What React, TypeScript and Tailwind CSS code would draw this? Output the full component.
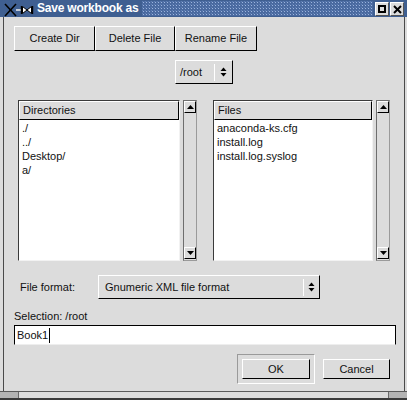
import React from "react";

const raised =
  "border border-t-white border-l-white border-b-black border-r-black bg-[#dcdcdc]";

function UpArrow() {
  return (
    <svg width="7" height="4" viewBox="0 0 7 4">
      <polygon points="0,4 3.5,0 7,4" fill="#000" />
    </svg>
  );
}

function DownArrow() {
  return (
    <svg width="7" height="4" viewBox="0 0 7 4">
      <polygon points="0,0 7,0 3.5,4" fill="#000" />
    </svg>
  );
}

function UpDown() {
  return (
    <svg width="7" height="10" viewBox="0 0 7 10">
      <polygon points="0.5,4 3.5,0.5 6.5,4" fill="#000" />
      <polygon points="0.5,6 6.5,6 3.5,9.5" fill="#000" />
    </svg>
  );
}

function Scrollbar() {
  return (
    <div className="w-[14px] h-full flex flex-col justify-between border border-t-[#6e6e6e] border-l-[#6e6e6e] border-b-[#9a9a9a] border-r-[#9a9a9a] bg-[#dcdcdc] pb-px">
      <div className={`${raised} h-[12px] flex items-center justify-center`}>
        <UpArrow />
      </div>
      <div className={`${raised} h-[12px] flex items-center justify-center`}>
        <DownArrow />
      </div>
    </div>
  );
}

function List({
  title,
  items,
  wide,
}: {
  title: string;
  items: string[];
  wide: boolean;
}) {
  return (
    <div
      className={`${
        wide ? "w-[162px]" : "w-[160px]"
      } h-full flex flex-col border border-t-[#3a3a3a] border-l-[#3a3a3a] border-b-[#f2f2f2] border-r-[#f2f2f2] bg-white`}
    >
      <div className={`${raised} h-[19px] flex items-center pl-[3px] leading-[13px]`}>
        {title}
      </div>
      <div className="flex-1 pt-px pl-[3px] leading-[14px]">
        {items.map((it) => (
          <div key={it}>{it}</div>
        ))}
      </div>
    </div>
  );
}

function TitleIcon() {
  return (
    <svg width="30" height="14" viewBox="0 0 30 14">
      <line x1="1" y1="1" x2="12" y2="13" stroke="#000" strokeWidth="1.6" />
      <line x1="12" y1="1" x2="1" y2="13" stroke="#000" strokeWidth="1.6" />
      <line x1="12" y1="7" x2="17" y2="7" stroke="#e6e6e6" strokeWidth="1.6" />
      <line x1="17.5" y1="3" x2="17.5" y2="11" stroke="#000" strokeWidth="1.4" />
      <polygon points="18.5,3.5 23,7 18.5,10.5" fill="#fff" stroke="#000" strokeWidth="1" />
      <polygon points="27.5,3.5 23,7 27.5,10.5" fill="#fff" stroke="#000" strokeWidth="1" />
      <line x1="28.5" y1="3" x2="28.5" y2="11" stroke="#000" strokeWidth="1.4" />
    </svg>
  );
}

function DotTexture() {
  return (
    <svg width="100%" height="100%" className="block">
      <defs>
        <pattern id="dots" width="3" height="3" patternUnits="userSpaceOnUse">
          <rect x="0" y="0" width="3" height="3" fill="#4a6aa0" />
          <rect x="1" y="1" width="1" height="1" fill="#9ab3dd" />
          <rect x="0" y="0" width="1" height="1" fill="#5f7fb4" />
        </pattern>
      </defs>
      <rect width="100%" height="100%" fill="url(#dots)" />
    </svg>
  );
}

export default function App() {
  return (
    <div className="w-[407px] h-[400px] bg-[#dcdcdc] text-[#111] text-[11px] [font-family:'Liberation_Sans',Arial,sans-serif] overflow-hidden flex flex-col">
      {/* Title bar */}
      <div className="h-[17px] flex items-stretch bg-[#3f5f91]">
        <div className="ml-[4px] mt-[3px] shrink-0">
          <TitleIcon />
        </div>
        <span className="ml-[3px] shrink-0 text-white font-bold text-[12px] leading-[17px] tracking-[-0.2px]">
          Save workbook as
        </span>
        <div className="flex-1 ml-[3px] mr-[2px] my-[1px]">
          <DotTexture />
        </div>
        <div className="shrink-0 mt-[2px] h-[14px] w-[14px] border border-t-white border-l-white border-b-[#555] border-r-[#555] bg-[#dcdcdc] flex items-center justify-center">
          <div className="w-[8px] h-[8px] border-2 border-black" />
        </div>
        <div className="shrink-0 ml-px mr-[3px] mt-[2px] h-[14px] w-[14px] border border-t-white border-l-white border-b-[#555] border-r-[#555] bg-[#dcdcdc] flex items-center justify-center">
          <svg width="9" height="9" viewBox="0 0 9 9">
            <line x1="1" y1="1" x2="8" y2="8" stroke="#000" strokeWidth="2" />
            <line x1="8" y1="1" x2="1" y2="8" stroke="#000" strokeWidth="2" />
          </svg>
        </div>
      </div>

      {/* Body */}
      <div className="flex h-[374px]">
        <div className="w-[4px] border-r border-[#4a4a4a]" />
        <div className="w-[400px] flex flex-col">
          {/* top buttons */}
          <div className="mt-[9px] pl-[10px] flex">
            <div className={`${raised} w-[81px] h-[25px] flex items-center justify-center`}>
              Create Dir
            </div>
            <div className={`${raised} w-[80px] h-[25px] flex items-center justify-center`}>
              Delete File
            </div>
            <div className={`${raised} w-[82px] h-[25px] flex items-center justify-center`}>
              Rename File
            </div>
          </div>

          {/* path option menu */}
          <div className="mt-[9px] flex justify-center">
            <div className={`${raised} w-[58px] h-[24px] flex items-center`}>
              <span className="flex-1 pl-[4px]">/root</span>
              <div className="w-px h-[17px] bg-white" />
              <div className="w-[17px] flex justify-center">
                <UpDown />
              </div>
            </div>
          </div>

          {/* lists */}
          <div className="mt-[16px] h-[161px] pl-[14px] flex">
            <List
              title="Directories"
              items={["./", "../", "Desktop/", "a/"]}
              wide={true}
            />
            <div className="ml-[3px] h-full">
              <Scrollbar />
            </div>
            <div className="ml-[16px] h-full">
              <List
                title="Files"
                items={["anaconda-ks.cfg", "install.log", "install.log.syslog"]}
                wide={false}
              />
            </div>
            <div className="ml-[3px] h-full">
              <Scrollbar />
            </div>
          </div>

          {/* file format */}
          <div className="mt-[14px] flex items-center">
            <span className="pl-[16px] w-[94px]">File format:</span>
            <div className={`${raised} w-[222px] h-[24px] flex items-center`}>
              <span className="flex-1 pl-[6px]">Gnumeric XML file format</span>
              <div className="w-px h-[17px] bg-white" />
              <div className="w-[15px] flex justify-center">
                <UpDown />
              </div>
            </div>
          </div>

          {/* selection */}
          <div className="mt-[11px] pl-[10px] leading-[13px]">Selection: /root</div>
          <div className="mt-[2px] ml-[10px] w-[382px] h-[20px] bg-white border border-t-black border-l-black border-r-black border-b-[#eeeeee] flex items-center pl-[2px]">
            <span>Book1</span>
            <span className="ml-px w-px h-[15px] bg-black" />
          </div>

          {/* ok/cancel */}
          <div className="mt-[9px] flex items-center justify-end pr-[14px]">
            <div className="border border-t-[#9a9a9a] border-l-[#9a9a9a] border-b-white border-r-white p-[4px]">
              <div className={`${raised} w-[68px] h-[20px] flex items-center justify-center`}>
                OK
              </div>
            </div>
            <div className={`${raised} ml-[8px] w-[67px] h-[20px] flex items-center justify-center`}>
              Cancel
            </div>
          </div>
        </div>
        <div className="w-[3px] border-l border-[#4a4a4a]" />
      </div>

      {/* bottom frame */}
      <div className="h-[9px] flex flex-col">
        <div className="h-px bg-[#5a5a5a]" />
        <div className="h-[6px] flex">
          <div className="w-[19px] bg-[#b4b4b4] border-r border-[#6a6a6a]" />
          <div className="flex-1 bg-[#dcdcdc]" />
          <div className="w-[19px] bg-[#b4b4b4] border-l border-[#6a6a6a]" />
        </div>
        <div className="h-[2px] bg-[#3a3a3a]" />
      </div>
    </div>
  );
}
